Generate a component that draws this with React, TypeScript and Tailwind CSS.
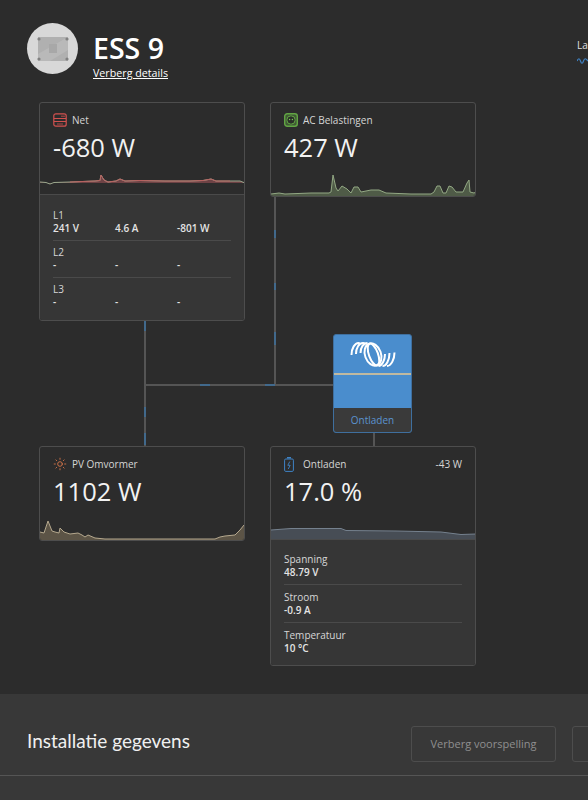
import { Sun } from "lucide-react";

const font = { fontFamily: '"Open Sans", sans-serif' };

function Spark({ d, base, fill, stroke, overlay }: { d: string; base: number; fill: string; stroke: string; overlay?: string }) {
  return (
    <svg viewBox="0 0 204 40" className="absolute left-0 bottom-0 w-[204px] h-[40px]">
      <path d={`${d} L205 ${base} L0 ${base} Z`} fill={fill} />
      <path d={d} fill="none" stroke={stroke} strokeWidth="1" />
      {overlay && <path d={overlay} fill="none" stroke="#b7605f" strokeWidth="1" />}
    </svg>
  );
}

function NetIcon() {
  return (
    <svg viewBox="0 0 14 14" className="w-[14px] h-[14px]" fill="none" stroke="#d2514f" strokeWidth="1.2">
      <rect x="0.8" y="0.8" width="12.4" height="12.4" rx="2" />
      <path d="M1 5.5H13M1 8.5H13" />
      <path d="M8 3.2H12M4 11H10" strokeWidth="0.8" />
    </svg>
  );
}

function LoadIcon() {
  return (
    <svg viewBox="0 0 14 14" className="w-[14px] h-[14px]" fill="none" stroke="#62a544" strokeWidth="1.4">
      <rect x="0.7" y="0.7" width="12.6" height="12.6" rx="2.5" fill="#3f5a34" />
      <rect x="3" y="3" width="8" height="8" rx="3.5" fill="#2a2f28" strokeWidth="1" />
      <circle cx="5.6" cy="6.5" r="0.7" fill="#7cc45a" stroke="none" />
      <circle cx="8.4" cy="6.5" r="0.7" fill="#7cc45a" stroke="none" />
    </svg>
  );
}

function BatteryIcon() {
  return (
    <svg viewBox="0 0 10 15" className="w-[10px] h-[15px]" fill="none" stroke="#3f83c6" strokeWidth="1">
      <rect x="0.6" y="2" width="8.8" height="12.4" rx="1.2" />
      <path d="M3 0.8H7" strokeWidth="1.4" />
      <path d="M5.8 4.5L3.8 8.3H6.2L4.2 12" strokeWidth="0.9" />
    </svg>
  );
}

function VictronLogo() {
  return (
    <svg viewBox="0 0 46 27" className="w-[46px] h-[27px]" fill="none" stroke="#fff" strokeWidth="2">
      <path d="M1.5 14C1.5 7 5 2 8.5 2C9 2 9.5 2.2 10 2.5" />
      <path d="M6 13C6 7 9 2 13 2C14 2 14.5 2.2 15 2.5" />
      <path d="M10.5 12C10.5 6.5 13.5 2 17.5 2" />
      <ellipse cx="23" cy="13.5" rx="8" ry="11.5" transform="rotate(-20 23 13.5)" />
      <ellipse cx="23.5" cy="13.5" rx="4.5" ry="11.5" transform="rotate(-20 23.5 13.5)" />
      <path d="M35 13C35 19 32 25 28.5 25" />
      <path d="M39.5 12C39.5 18.5 36.5 25 32.5 25" />
      <path d="M44.5 11.5C44.5 18.5 41 25 37 25" />
    </svg>
  );
}

function Head({ icon, label, value, right }: { icon: React.ReactNode; label: string; value: string; right?: string }) {
  return (
    <div className="px-[13px] pt-[9px]">
      <div className="flex items-center h-[16px] text-[10px] text-[#d6d6d6]">
        <span className="w-[19px] flex items-center">{icon}</span>
        <span>{label}</span>
        {right && <span className="ml-auto">{right}</span>}
      </div>
      <div className="mt-[2px] text-[25.5px] leading-[34px] text-[#f2f2f2]">{value}</div>
    </div>
  );
}

function PhaseRow({ name, cols, line }: { name: string; cols: string[]; line?: boolean }) {
  return (
    <div className={`h-[37px] pt-[5px] ${line ? "border-b border-[#4a4a4a]" : ""}`}>
      <div className="text-[10px] leading-[13px] text-[#d6d6d6]">{name}</div>
      <div className="grid grid-cols-[62px_62px_1fr] text-[10px] leading-[13px] font-semibold text-[#e4e4e4]">
        {cols.map((c, i) => (
          <span key={i}>{c}</span>
        ))}
      </div>
    </div>
  );
}

function BattRow({ name, value, line }: { name: string; value: string; line?: boolean }) {
  return (
    <div className={`h-[38px] pt-[6px] ${line ? "border-b border-[#4a4a4a]" : ""}`}>
      <div className="text-[10px] leading-[13px] text-[#d6d6d6]">{name}</div>
      <div className="text-[10px] leading-[13px] font-semibold text-[#e4e4e4]">{value}</div>
    </div>
  );
}

function Pulse({ className }: { className: string }) {
  return <div className={`absolute bg-[#41698c] ${className}`} />;
}

export default function App() {
  return (
    <div style={font} className="w-[588px] h-[800px] overflow-hidden flex flex-col bg-[#2c2c2c] text-white">
      {/* header */}
      <div className="h-[88px] pl-[27px] pt-[23px] flex items-start shrink-0 relative">
        <div className="w-[51px] h-[51px] rounded-full bg-[#d8d8d8] flex items-center justify-center">
          <svg viewBox="0 0 32 26" className="w-[32px] h-[26px]">
            <rect x="1" y="1" width="30" height="24" fill="#b0b0b0" />
            <path d="M31 1V14L13 25H1V18Z" fill="#b9b9b9" />
            <rect x="12" y="8" width="8" height="9" fill="#a8a8a8" />
            <circle cx="2" cy="3" r="1.6" fill="#808080" />
            <circle cx="30" cy="3" r="1.6" fill="#808080" />
            <circle cx="2" cy="23" r="1.6" fill="#808080" />
            <circle cx="30" cy="23" r="1.6" fill="#808080" />
          </svg>
        </div>
        <div className="ml-[15px]">
          <div className="text-[28.5px] leading-[30px] mt-[10px] font-semibold">ESS 9</div>
          <div className="text-[10.7px] leading-[13px] mt-[4px] underline">Verberg details</div>
        </div>
        <div className="absolute left-[577px] top-[39px] text-[10px] leading-[13px] text-[#e0e0e0]">La</div>
        <svg viewBox="0 0 11 6" className="absolute left-[577px] top-[58px] w-[11px] h-[6px]" fill="none" stroke="#3f83c6" strokeWidth="1.2">
          <path d="M0 3C1.5 0 2.5 0 3.5 3S5.5 6 6.5 3S8.5 0 11 3" />
        </svg>
      </div>

      {/* diagram */}
      <div className="relative h-[606px] shrink-0 pl-[39px] pt-[14px] grid grid-cols-[206px_206px] grid-rows-[344px_auto] gap-x-[25px] items-start">
        {/* connectors */}
        <div className="absolute left-[144px] top-[233px] w-[2px] h-[125px] bg-[#555]" />
        <div className="absolute left-[144px] top-[296px] w-[189px] h-[2px] bg-[#555]" />
        <div className="absolute left-[274px] top-[108px] w-[2px] h-[189px] bg-[#555]" />
        <div className="absolute left-[373px] top-[345px] w-[2px] h-[13px] bg-[#555]" />
        <Pulse className="left-[144px] top-[233px] w-[2px] h-[10px]" />
        <Pulse className="left-[144px] top-[319px] w-[2px] h-[10px]" />
        <Pulse className="left-[144px] top-[345px] w-[2px] h-[12px]" />
        <Pulse className="left-[274px] top-[142px] w-[2px] h-[8px]" />
        <Pulse className="left-[274px] top-[195px] w-[2px] h-[7px]" />
        <Pulse className="left-[274px] top-[244px] w-[2px] h-[13px]" />
        <Pulse className="left-[200px] top-[296px] w-[10px] h-[2px]" />
        <Pulse className="left-[265px] top-[296px] w-[10px] h-[2px]" />

        {/* Net */}
        <div className="relative h-[219px] rounded-[3px] border border-[#4d4d4d] overflow-hidden">
          <div className="relative h-[92px] border-b border-[#4a4a4a]">
            <Head icon={<NetIcon />} label="Net" value="-680 W" />
            <Spark
              base={29}
              fill="#6e4245"
              stroke="#9aa88e"
              d="M0 28L6 28.5L10 30L14 28.5L30 28L55 27L60 26.5L61 21L64 26L68 28L76 27L80 25L85 27L100 26.5L125 27L150 27L163 26.5L171 25L176 27L190 27L196 27L200 27L205 29"
              overlay="M30 28L55 27L60 26.5L61 21L64 26L68 28L76 27L80 25L85 27L100 26.5L125 27L150 27L163 26.5L171 25L176 27L190 27"
            />
          </div>
          <div className="h-[125px] bg-[#363636] px-[13px] pt-[9px]">
            <PhaseRow name="L1" cols={["241 V", "4.6 A", "-801 W"]} line />
            <PhaseRow name="L2" cols={["-", "-", "-"]} line />
            <PhaseRow name="L3" cols={["-", "-", "-"]} />
          </div>
        </div>

        {/* AC */}
        <div className="relative h-[95px] rounded-[3px] border border-[#4d4d4d] overflow-hidden">
          <Head icon={<LoadIcon />} label="AC Belastingen" value="427 W" />
          <Spark
            base={40}
            fill="#4f5b47"
            stroke="#93a884"
            d="M0 38L8 37L14 38L40 37L58 37L60 36L62 19L65 32L67 35L71 30L76 33L80 37L83 31L87 31L90 36L100 34L108 34L115 37L140 38L160 38L163 36L166 30L169 30L172 37L175 37L178 30L181 31L185 36L192 36L196 27L198 24L199 36L203 37L205 36"
          />
        </div>

        {/* PV */}
        <div className="relative h-[95px] rounded-[3px] border border-[#4d4d4d] overflow-hidden">
          <Head icon={<Sun size={14} color="#d9774a" strokeWidth={1.5} />} label="PV Omvormer" value="1102 W" />
          <Spark
            base={40}
            fill="#5c5446"
            stroke="#b5a88e"
            d="M0 32L4 33L8 21L12 31L15 32L19 33L20 28L24 32L30 34L38 33L42 35L45 37L48 35L55 38L65 39L175 39L180 37L185 36L195 35L200 30L204 25L205 25"
          />
        </div>

        {/* battery */}
        <div className="relative h-[220px] rounded-[3px] border border-[#4d4d4d] overflow-hidden">
          <div className="relative h-[93px] border-b border-[#4a4a4a]">
            <Head icon={<BatteryIcon />} label="Ontladen" value="17.0 %" right="-43 W" />
            <Spark
              base={40}
              fill="#474d55"
              stroke="#75818e"
              d="M0 31L20 29.5L70 29.5L75 31.5L125 32L170 33L190 35.5L205 35"
            />
          </div>
          <div className="h-[126px] bg-[#363636] px-[13px] pt-[7px]">
            <BattRow name="Spanning" value="48.79 V" line />
            <BattRow name="Stroom" value="-0.9 A" line />
            <BattRow name="Temperatuur" value="10 °C" />
          </div>
        </div>

        {/* inverter */}
        <div className="absolute left-[333px] top-[246px] w-[79px] h-[99px] rounded-[3px] border border-[#3f6f9e] overflow-hidden flex flex-col bg-[#4a8dcd]">
          <div className="h-[40px] flex items-start justify-center pt-[6px] border-b-[2px] border-[#c0b9a0]">
            <VictronLogo />
          </div>
          <div className="h-[33px]" />
          <div className="flex-1 bg-[#3a3a3a] flex items-center justify-center text-[10px] text-[#5a93cf]">Ontladen</div>
        </div>
      </div>

      {/* bottom section */}
      <div className="flex-1 bg-[#383838]">
        <div className="h-[82px] border-b border-[#555] pl-[27px] pt-[32px] flex items-start">
          <h2 style={{ fontFamily: "Lato, sans-serif" }} className="text-[19px] leading-[30px] font-normal text-[#f0f0f0] w-[384px] shrink-0">
            Installatie gegevens
          </h2>
          <button className="w-[145px] h-[36px] shrink-0 rounded-[3px] border border-[#4d4d4d] text-[11px] text-[#8f8f8f]">
            Verberg voorspelling
          </button>
          <div className="w-[40px] h-[36px] shrink-0 ml-[16px] rounded-[3px] border border-[#4d4d4d]" />
        </div>
      </div>
    </div>
  );
}
